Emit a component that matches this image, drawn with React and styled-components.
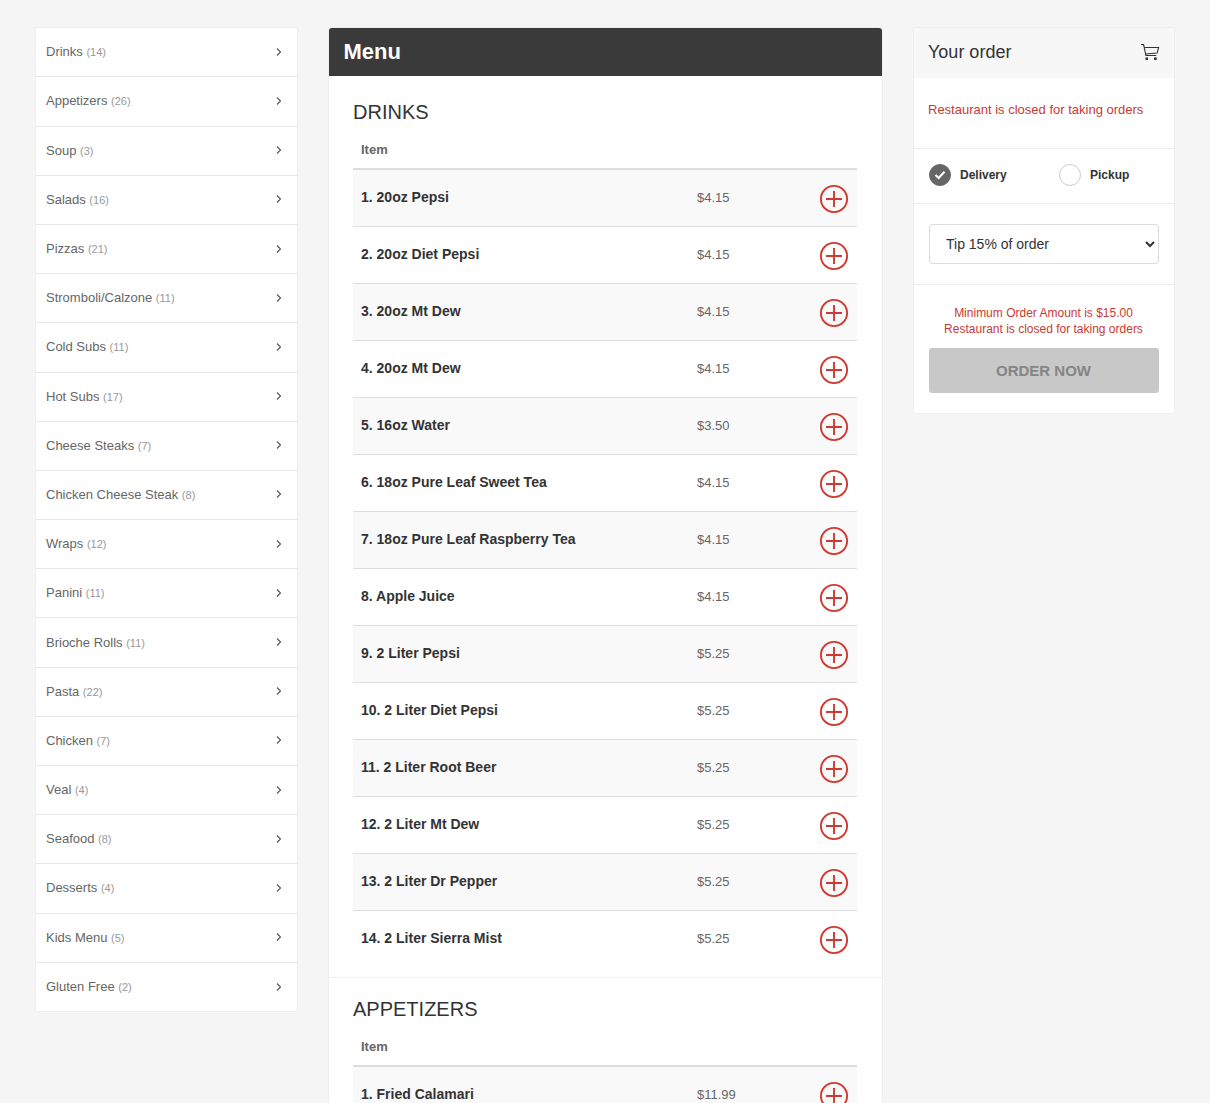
import React from "react";
import styled, { createGlobalStyle } from "styled-components";

const Global = createGlobalStyle`
  html, body { margin: 0; padding: 0; height: 100%; overflow: hidden; background: #f5f5f5; }
  body { font-family: "Liberation Sans", Arial, sans-serif; color: #333; }
  * { box-sizing: border-box; }
`;

const Page = styled.div`
  display: grid;
  grid-template-columns: 263px 555px 262px;
  column-gap: 30px;
  align-items: start;
  padding: 27px 35px 0;
  height: 1103px;
  overflow: hidden;
`;

const Card = styled.div`
  background: #fff;
  border: 1px solid #eeeeee;
  border-radius: 3px;
`;

const Categories = styled(Card)`
  display: flex;
  flex-direction: column;
  height: 985px;
  padding-top: 0.22px;
`;

const Category = styled.a`
  flex: none;
  height: 49.1875px;
  display: flex;
  align-items: center;
  justify-content: space-between;
  padding: 0 14px 1.13px 10px;
  font-size: 13px;
  color: #666;
  border-bottom: 1px solid #e8e8e8;
  &:last-child { border-bottom: 0; }
`;

const Count = styled.span`
  font-size: 11px;
  color: #999;
  margin-left: 3.6px;
`;

const Menu = styled(Card)``;

const MenuTitle = styled.h1`
  margin: 0;
  height: 48px;
  background: #3a3a3a;
  color: #fff;
  font-size: 22px;
  font-weight: 700;
  line-height: 48px;
  padding-left: 14.5px;
  border-radius: 3px 3px 0 0;
`;

const Section = styled.section`
  padding: ${p => (p.$first ? "24px" : "19px")} 25px 10px 24px;
  & + & { border-top: 1px solid #eeeeee; }
`;

const SectionTitle = styled.h2`
  margin: 0;
  font-size: 20px;
  font-weight: 400;
  line-height: 24px;
  color: #333;
`;

const TableHead = styled.div`
  height: 38px;
  margin-top: 8px;
  padding: 0 8px 1px;
  display: flex;
  align-items: center;
  font-size: 13px;
  font-weight: 700;
  color: #666;
  border-bottom: 2px solid #ddd;
`;

const Row = styled.div`
  display: flex;
  align-items: flex-start;
  height: ${p => (p.$top ? "56px" : "57px")};
  padding: 0 8px;
  background: ${p => (p.$odd ? "#f9f9f9" : "#fff")};
  border-top: ${p => (p.$top ? "0" : "1px solid #ddd")};
`;

const ItemName = styled.div`
  width: 336px;
  font-size: 14px;
  font-weight: 700;
  color: #333;
  line-height: 20px;
  padding-top: 17px;
`;

const Price = styled.div`
  flex: 1;
  font-size: 13px;
  color: #666;
  line-height: 20px;
  padding-top: 18px;
`;

const AddButton = styled.svg`
  width: 30px;
  height: 30px;
  margin-top: 14px;
  display: block;
`;

const OrderPanel = styled(Card)``;

const OrderHead = styled.div`
  height: 50px;
  background: #f7f7f7;
  display: flex;
  align-items: center;
  justify-content: space-between;
  padding: 0 14px 2px 14px;
  font-size: 18px;
  color: #333;
`;

const OrderBlock = styled.div`
  padding: ${p => p.$pad};
  & + & { border-top: 1px solid #eeeeee; }
`;

const Closed = styled.div`
  font-size: 13px;
  color: #c93a32;
  line-height: 18px;
`;

const Modes = styled.div`
  display: grid;
  grid-template-columns: 130px 1fr;
  height: 54px;
  align-items: center;
  padding: 0 0 2px 15px;
`;

const Mode = styled.div`
  display: flex;
  align-items: center;
  gap: 9px;
  font-size: 12px;
  font-weight: 700;
  color: #333;
`;

const Radio = styled.span`
  width: 22px;
  height: 22px;
  border-radius: 50%;
  display: flex;
  align-items: center;
  justify-content: center;
  background: ${p => (p.$on ? "#666" : "#fff")};
  border: 1px solid ${p => (p.$on ? "#666" : "#ccc")};
`;

const TipSelect = styled.select`
  display: block;
  width: 100%;
  height: 40px;
  padding: 0 12px;
  font-family: inherit;
  font-size: 14px;
  color: #333;
  background: #fff;
  border: 1px solid #ddd;
  border-radius: 3px;
`;

const Notice = styled.div`
  text-align: center;
  font-size: 12px;
  line-height: 16px;
  color: #c93a32;
  padding-right: 1px;
`;

const OrderNow = styled.button`
  display: block;
  width: 100%;
  height: 45px;
  margin-top: 11px;
  padding: 0 1px 0 0;
  border: 0;
  border-radius: 3px;
  background: #c8c8c8;
  color: #858585;
  font-family: inherit;
  font-size: 15px;
  font-weight: 700;
`;

const Chevron = () => (
  <svg width="8" height="10" viewBox="0 0 8 10" fill="none" stroke="#555" strokeWidth="1.1">
    <path d="M2 1.5 5.5 5 2 8.5" />
  </svg>
);

const Plus = () => (
  <AddButton viewBox="0 0 30 30" fill="none" stroke="#d0392f">
    <circle cx="15" cy="15" r="13.1" strokeWidth="1.9" />
    <path d="M15 7v16M7 15h16" strokeWidth="1.9" />
  </AddButton>
);

const Cart = () => (
  <svg width="20" height="18" viewBox="0 0 20 18" fill="none" stroke="#333" strokeWidth="1.1">
    <path d="M1 1.5h2.6l2.3 11h10.4" />
    <path d="M4.2 4.5H18.6l-1.5 5.6-11.6.9" />
    <circle cx="6.8" cy="15.8" r=".9" fill="#333" />
    <circle cx="15.4" cy="15.8" r=".9" fill="#333" />
  </svg>
);

const categories = [
  ["Drinks", 14], ["Appetizers", 26], ["Soup", 3], ["Salads", 16], ["Pizzas", 21],
  ["Stromboli/Calzone", 11], ["Cold Subs", 11], ["Hot Subs", 17], ["Cheese Steaks", 7],
  ["Chicken Cheese Steak", 8], ["Wraps", 12], ["Panini", 11], ["Brioche Rolls", 11],
  ["Pasta", 22], ["Chicken", 7], ["Veal", 4], ["Seafood", 8], ["Desserts", 4],
  ["Kids Menu", 5], ["Gluten Free", 2],
];

const drinks = [
  ["1. 20oz Pepsi", "$4.15"], ["2. 20oz Diet Pepsi", "$4.15"], ["3. 20oz Mt Dew", "$4.15"],
  ["4. 20oz Mt Dew", "$4.15"], ["5. 16oz Water", "$3.50"], ["6. 18oz Pure Leaf Sweet Tea", "$4.15"],
  ["7. 18oz Pure Leaf Raspberry Tea", "$4.15"], ["8. Apple Juice", "$4.15"], ["9. 2 Liter Pepsi", "$5.25"],
  ["10. 2 Liter Diet Pepsi", "$5.25"], ["11. 2 Liter Root Beer", "$5.25"], ["12. 2 Liter Mt Dew", "$5.25"],
  ["13. 2 Liter Dr Pepper", "$5.25"], ["14. 2 Liter Sierra Mist", "$5.25"],
];

const MenuSection = ({ title, items, first }) => (
  <Section $first={first}>
    <SectionTitle>{title}</SectionTitle>
    <TableHead>Item</TableHead>
    {items.map(([name, price], i) => (
      <Row key={name} $odd={i % 2 === 0} $top={i === 0}>
        <ItemName>{name}</ItemName>
        <Price>{price}</Price>
        <Plus />
      </Row>
    ))}
  </Section>
);

export default function App() {
  return (
    <>
      <Global />
      <Page>
        <Categories>
          {categories.map(([name, n]) => (
            <Category key={name}>
              <span>{name}<Count>({n})</Count></span>
              <Chevron />
            </Category>
          ))}
        </Categories>
        <Menu>
          <MenuTitle>Menu</MenuTitle>
          <MenuSection first title="DRINKS" items={drinks} />
          <MenuSection title="APPETIZERS" items={[["1. Fried Calamari", "$11.99"]]} />
        </Menu>
        <OrderPanel>
          <OrderHead>Your order<Cart /></OrderHead>
          <OrderBlock $pad="23px 14px 29px"><Closed>Restaurant is closed for taking orders</Closed></OrderBlock>
          <OrderBlock $pad="0">
            <Modes>
              <Mode>
                <Radio $on>
                  <svg width="12" height="10" viewBox="0 0 12 10" fill="none" stroke="#fff" strokeWidth="2.2">
                    <path d="M1.5 5 4.6 8 10.5 1.8" />
                  </svg>
                </Radio>
                Delivery
              </Mode>
              <Mode><Radio />Pickup</Mode>
            </Modes>
          </OrderBlock>
          <OrderBlock $pad="20px 15px">
            <TipSelect defaultValue="15"><option value="15">Tip 15% of order</option></TipSelect>
          </OrderBlock>
          <OrderBlock $pad="20px 15px 20px">
            <Notice>Minimum Order Amount is $15.00<br />Restaurant is closed for taking orders</Notice>
            <OrderNow>ORDER NOW</OrderNow>
          </OrderBlock>
        </OrderPanel>
      </Page>
    </>
  );
}
